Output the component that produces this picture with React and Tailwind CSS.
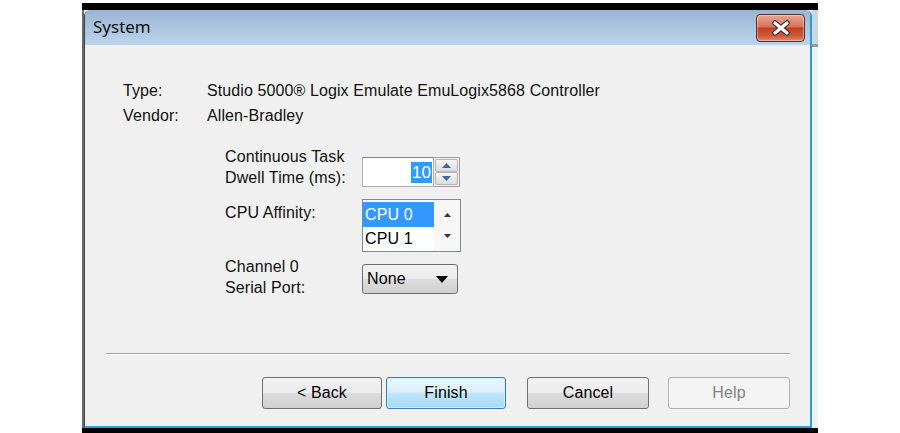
import React from 'react';

const font = { fontFamily: '"Liberation Sans", Arial, sans-serif' };

function Tri({ dir = 'down', w = 8, h = 4, color = '#000' }) {
  const pts = dir === 'down' ? `0,0 ${w},0 ${w / 2},${h}` : `0,${h} ${w},${h} ${w / 2},0`;
  return (
    <svg width={w} height={h} viewBox={`0 0 ${w} ${h}`} className="block">
      <polygon points={pts} fill={color} />
    </svg>
  );
}

function CloseButton() {
  return (
    <div className="ml-auto mr-[5px] mt-[4px] flex h-[28px] w-[49px] items-center justify-center rounded-[4px] border border-[#5b2f2b] bg-[linear-gradient(to_bottom,#eaa594_0%,#d8735c_45%,#c1401f_50%,#cd5a3c_80%,#e08b70_100%)] shadow-[inset_0_0_0_1px_rgba(255,255,255,0.35)]">
      <svg width="22" height="16" viewBox="0 0 22 16">
        <path d="M5 3 L17 13 M17 3 L5 13" stroke="#3b2a2a" strokeWidth="5.5" strokeLinecap="round" />
        <path d="M5 3 L17 13 M17 3 L5 13" stroke="#ffffff" strokeWidth="3.2" strokeLinecap="round" />
      </svg>
    </div>
  );
}

function Spinner() {
  return (
    <div className="mt-[11px] flex h-[30px] w-[98px]">
      <div className="flex h-full w-[72px] items-center justify-end border border-[#abadb3] border-t-[#7d8490] bg-white pr-[1px]">
        <span className="bg-[#3399ff] px-[1px] text-[17px] leading-[21px] text-white">10</span>
      </div>
      <div className="flex h-full w-[26px] flex-col border border-l-0 border-[#a0a0a0] bg-[#f0f0f0] p-[1px]">
        <div className="flex flex-1 items-center justify-center rounded-[2px] border border-[#b5b5b5] bg-[linear-gradient(to_bottom,#f6f6f6,#dcdcdc)]">
          <Tri dir="up" w={9} h={5} color="#3f6a9b" />
        </div>
        <div className="flex flex-1 items-center justify-center rounded-[2px] border border-[#b5b5b5] bg-[linear-gradient(to_bottom,#f6f6f6,#dcdcdc)]">
          <Tri dir="down" w={9} h={5} color="#3f6a9b" />
        </div>
      </div>
    </div>
  );
}

function ListBox() {
  return (
    <div className="flex h-[53px] w-[99px] border border-[#828790] bg-white">
      <div className="flex w-[71px] flex-col pt-[2px]">
        <div className="h-[25px] bg-[#3399ff] pl-[2px] text-[16px] leading-[25px] text-white">CPU 0</div>
        <div className="h-[24px] pl-[2px] text-[16px] leading-[24px] text-black">CPU 1</div>
      </div>
      <div className="flex flex-1 flex-col items-center justify-around bg-[#f7f7f7] py-[4px]">
        <Tri dir="up" w={7} h={4} color="#333" />
        <Tri dir="down" w={7} h={4} color="#333" />
      </div>
    </div>
  );
}

function Dropdown() {
  return (
    <div className="mt-[8px] flex h-[30px] w-[96px] items-center justify-between rounded-[3px] border border-[#707070] bg-[linear-gradient(to_bottom,#f2f2f2_0%,#ebebeb_50%,#dddddd_51%,#cfcfcf_100%)] pl-[4px] pr-[9px]">
      <span className="text-[16px] text-black">None</span>
      <Tri dir="down" w={12} h={7} color="#000" />
    </div>
  );
}

function Button({ children, variant = 'normal', className = '' }) {
  const styles = {
    normal:
      'border-[#707070] bg-[linear-gradient(to_bottom,#f2f2f2_0%,#ebebeb_50%,#dddddd_51%,#cfcfcf_100%)] text-black',
    focus:
      'border-[#3c7fb1] bg-[linear-gradient(to_bottom,#eaf6fd_0%,#d9f0fc_50%,#bee6fd_51%,#a7d9f5_100%)] text-black shadow-[inset_0_0_0_1px_#cdeefc]',
    disabled: 'border-[#adb2b5] bg-[#f4f4f4] text-[#838383]',
  };
  return (
    <div
      className={`flex h-[32px] items-center justify-center rounded-[3px] border text-[16px] ${styles[variant]} ${className}`}
    >
      {children}
    </div>
  );
}

export default function App() {
  return (
    <div className="h-[433px] w-[900px] overflow-hidden bg-white" style={font}>
      <div className="ml-[82px] flex h-[433px] w-[736px] flex-col pt-[3px]">
        <div className="h-[7px] bg-black" />
        <div className="flex h-[418px]">
          <div className="w-[2px] bg-[#6b6b6b]" />
          <div className="flex w-[728px] flex-col overflow-hidden rounded-t-[6px] border-l border-r-2 border-b-2 border-l-[#3a3f48] border-r-[#2a9fce] border-b-[#2aa6d4] bg-[#f0f0f0]">
            <div className="flex h-[35px] shrink-0 bg-[linear-gradient(to_bottom,#9ab5d3,#bcd4ec)]">
              <span
                className="ml-[8px] mt-[6px] text-[17px] leading-[22px] text-[#111]"
                style={{ fontFamily: '"Noto Sans", "Open Sans", sans-serif' }}
              >
                System
              </span>
              <CloseButton />
            </div>

            <div className="flex flex-1 flex-col text-[16px] tracking-[0.1px] text-[#111]">
              <div className="mt-[33px] flex h-[25px] items-center pl-[38px]">
                <span className="w-[84px]">Type:</span>
                <span>Studio 5000® Logix Emulate EmuLogix5868 Controller</span>
              </div>
              <div className="flex h-[25px] items-center pl-[38px]">
                <span className="w-[84px]">Vendor:</span>
                <span>Allen-Bradley</span>
              </div>

              <div className="mt-[18px] flex pl-[140px]">
                <div className="w-[137px] leading-[21px]">
                  Continuous Task
                  <br />
                  Dwell Time (ms):
                </div>
                <Spinner />
              </div>

              <div className="mt-[11px] flex pl-[140px]">
                <div className="mt-[3px] w-[137px] leading-[21px]">CPU Affinity:</div>
                <ListBox />
              </div>

              <div className="mt-[4px] flex pl-[140px]">
                <div className="w-[137px] leading-[21px]">
                  Channel 0
                  <br />
                  Serial Port:
                </div>
                <Dropdown />
              </div>

              <div className="ml-[21px] mt-[55px] w-[684px] border-t border-b border-t-[#a0a0a0] border-b-white" />

              <div className="ml-[177px] mt-[22px] flex">
                <Button className="mr-[4px] w-[120px]">&lt; Back</Button>
                <Button variant="focus" className="mr-[21px] w-[120px]">
                  Finish
                </Button>
                <Button className="mr-[19px] w-[122px]">Cancel</Button>
                <Button variant="disabled" className="w-[122px]">
                  Help
                </Button>
              </div>
            </div>
          </div>
          <div className="flex w-[6px] flex-col bg-[#eef1f4]">
            <div className="h-[34px] bg-[#c9d6e3]" />
            <div className="h-[3px] bg-[#9a9a9a]" />
          </div>
        </div>
        <div className="h-[5px] bg-black" />
      </div>
    </div>
  );
}
